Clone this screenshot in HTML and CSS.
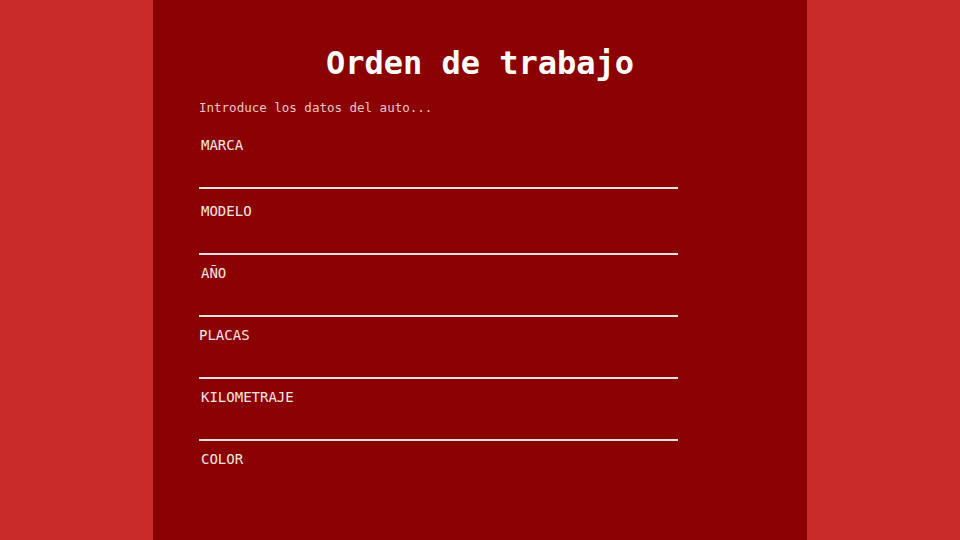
FILE: index.html
```html
<!DOCTYPE html>
<html lang="es">
<head>
<meta charset="utf-8">
<title>Orden de trabajo</title>
<link rel="stylesheet" href="styles.css">
</head>
<body>
<main class="sheet">
  <h1 class="title">Orden de trabajo</h1>
  <form class="form">
    <p class="intro">Introduce los datos del auto...</p>
    <div class="field field--first">
      <label class="label" for="marca">MARCA</label>
      <input class="input" id="marca" type="text">
    </div>
    <div class="field">
      <label class="label" for="modelo">MODELO</label>
      <input class="input" id="modelo" type="text">
    </div>
    <div class="field">
      <label class="label" for="anio">AÑO</label>
      <input class="input" id="anio" type="text">
    </div>
    <div class="field">
      <label class="label label--flush" for="placas">PLACAS</label>
      <input class="input" id="placas" type="text">
    </div>
    <div class="field">
      <label class="label" for="km">KILOMETRAJE</label>
      <input class="input" id="km" type="text">
    </div>
    <div class="field">
      <label class="label" for="color">COLOR</label>
    </div>
  </form>
</main>
</body>
</html>
```
FILE: styles.css
```css
html, body {
  margin: 0;
  padding: 0;
}

body {
  background: #c92a2a;
  display: flex;
  justify-content: center;
  min-height: 100vh;
  font-family: "DejaVu Sans Mono", "Liberation Mono", monospace;
  color: #f3e6e6;
}

.sheet {
  width: 654px;
  min-height: 100vh;
  background: #8b0000;
  box-sizing: border-box;
  padding: 43px 0 0 46px;
}

.title {
  margin: 0 46px 0 0;
  font-size: 32px;
  line-height: 40px;
  font-weight: bold;
  color: #ffffff;
  text-align: center;
}

.form {
  width: 479px;
  margin: 0;
}

.intro {
  margin: 17px 0 20px;
  font-size: 12.5px;
  line-height: 16px;
  color: #e9c6c6;
}

.field {
  margin-bottom: 9px;
}

.field--first {
  margin-bottom: 13px;
}

.label {
  display: block;
  padding-left: 2px;
  font-size: 14px;
  line-height: 18px;
  color: #f3e6e6;
}

.label--flush {
  padding-left: 0;
}

.input {
  display: block;
  box-sizing: border-box;
  width: 479px;
  height: 35px;
  margin: 0;
  padding: 0;
  border: none;
  border-bottom: 2px solid #ece0e0;
  background: transparent;
  outline: none;
  color: #ffffff;
  font: inherit;
}
```
